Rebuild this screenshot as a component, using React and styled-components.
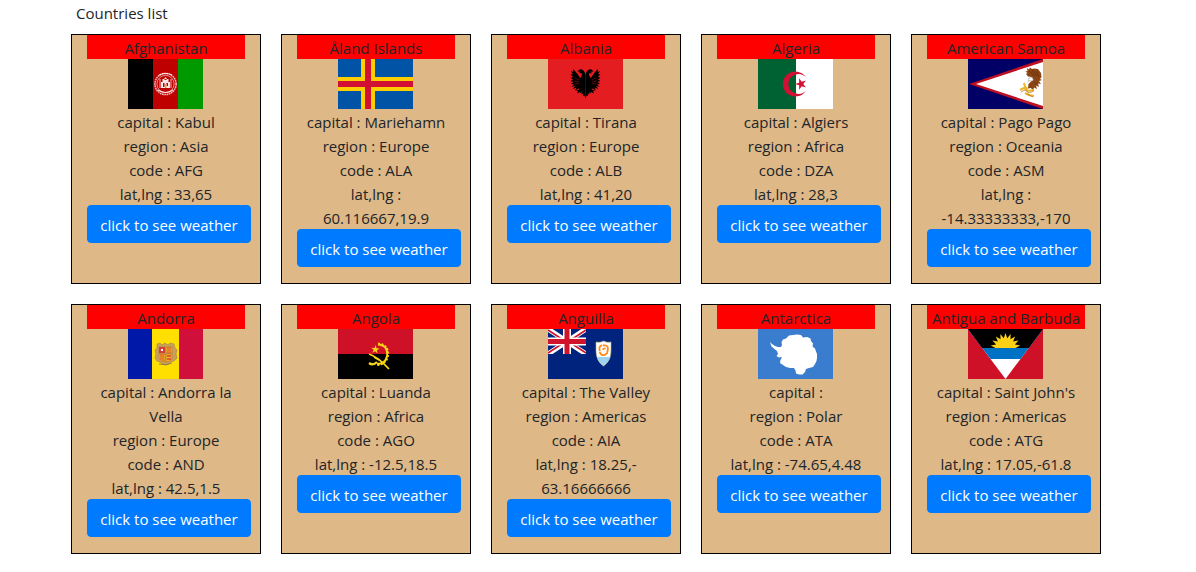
import React from "react";
import styled, { createGlobalStyle } from "styled-components";

const GlobalStyle = createGlobalStyle`
  *, *::before, *::after { box-sizing: border-box; }
  body {
    margin: 0;
    background: #fff;
    color: #212529;
    font-family: "Segoe UI", "Open Sans", "Noto Sans", sans-serif;
    font-size: 15px;
    line-height: 24px;
  }
`;

const Page = styled.main`
  padding: 0 40px 10px 16px;
`;

const CountryGrid = styled.div`
  display: grid;
  grid-template-columns: repeat(auto-fill, 210px);
  justify-content: center;
`;

const Title = styled.h1`
  grid-column: 1 / -1;
  margin: 0;
  padding: 1px 15px 0;
  height: 24px;
  font-size: 15px;
  font-weight: 400;
`;

const Card = styled.article`
  min-height: 250px;
  margin: 10px;
  padding: 0 15px;
  border: 1px solid #000;
  background: #deb887;
  text-align: center;
`;

const Name = styled.h2`
  margin: 0;
  height: 24px;
  background: #f00;
  font-size: 15px;
  font-weight: 400;
  line-height: 26px;
  white-space: nowrap;
`;

const Flag = styled.svg`
  display: block;
  width: 75px;
  height: 50px;
  margin: 0 42px 0 41px;
`;

const Details = styled.div`
  padding-top: 1px;
  margin-bottom: -1px;
`;

const Detail = styled.p`
  margin: 0;
`;

const WeatherButton = styled.button`
  display: block;
  width: 164px;
  height: 38px;
  padding: 2px 0 0;
  border: 1px solid #007bff;
  border-radius: 4px;
  background: #007bff;
  color: #fff;
  font: inherit;
  white-space: nowrap;
  cursor: pointer;
`;

const star = (cx, cy, r, inner, points, turn = -90) =>
  Array.from({ length: points * 2 }, (_, i) => {
    const a = ((turn + (i * 180) / points) * Math.PI) / 180;
    const d = i % 2 ? inner : r;
    return `${(cx + d * Math.cos(a)).toFixed(2)},${(cy + d * Math.sin(a)).toFixed(2)}`;
  }).join(" ");

const eagleHalf =
  "M37.5 16L36.8 13.5L35.5 11.5L33.5 10.200L31.500 10.500L29.500 12.500L32.200 12.800L31 14.300L33.500 14L34 16L32.500 19L31.500 18L29.500 15L27 12L25 10L25.500 13L23 12L25 15.500L22.500 15L25 18L22.500 18.800L25 20.500L22.500 22L25.500 23L23 25L26 25.200L23.500 27.800L27 27L25 30L28.500 28.500L27 31.500L30.500 29.500L31.500 30.500L28 31.500L30 32.500L29 34.500L32 33L32.500 34.500L34 32.500L33.500 35.500L35.200 34.500L35 37L36.500 36.500L37.500 39.500Z";

const flags = {
  AFG: (
    <>
      <path fill="#000" d="M0 0h25v50H0z" />
      <path fill="#bf0000" d="M25 0h25v50H25z" />
      <path fill="#009a00" d="M50 0h25v50H50z" />
      <g fill="none" stroke="#fff">
        <circle cx="37.5" cy="25" r="10.6" strokeWidth="1.5" strokeDasharray="1.7 .6" opacity=".75" />
        <circle cx="37.5" cy="25" r="8.6" strokeWidth=".8" opacity=".7" />
        <path d="M30 31q7.500 5 15 0M31 16q6.500-3 13 0" strokeWidth="1.2" opacity=".8" />
        <path d="M32 20v9M43 20v9" strokeWidth="1" opacity=".7" />
      </g>
      <path fill="#fff" opacity=".9" d="M33 29v-6h1.500v-3h1.500l1.500-2 1.500 2h1.500v3H42v6z" />
      <path fill="#bf0000" d="M35 24h1.500v4H35zM38.500 24H40v3h-1.500zM36.500 20h2v1h-2z" />
      <path fill="#d9ad3c" d="M37 25h1.500v4H37z" />
    </>
  ),
  ALA: (
    <>
      <path fill="#0053a5" d="M0 0h75v50H0z" />
      <path fill="#ffce00" d="M23 0h14v50H23zM0 18h75v14H0z" />
      <path fill="#d21034" d="M27 0h6v50h-6zM0 22h75v6H0z" />
    </>
  ),
  ALB: (
    <>
      <path fill="#e41e20" d="M0 0h75v50H0z" />
      <path d={eagleHalf} />
      <path d={eagleHalf} transform="translate(75 0) scale(-1 1)" />
      <path
        d="M27 19l4 2m-5 1 5 1m-4 2 4-.5m17-5.500-4 2m5 1-5 1m4 2-4-.5"
        fill="none"
        stroke="#8c1415"
        strokeWidth=".6"
      />
    </>
  ),
  DZA: (
    <>
      <path fill="#006233" d="M0 0h38v50H0z" />
      <path fill="#fff" d="M38 0h37v50H38z" />
      <path fill="#d21034" d="M48 18.500a12.500 12.500 0 1 0 0 13 10 10 0 1 1 0-13z" />
      <polygon fill="#d21034" points={star(43, 25, 6, 2.3, 5, 180)} />
    </>
  ),
  ASM: (
    <>
      <path fill="#006" d="M0 0h75v50H0z" />
      <path fill="#bd1021" d="M75 0v50L1 25z" />
      <path fill="#fff" d="M75 3v44L8 25z" />
      <path
        fill="#8b4513"
        d="M59 9L61 10.500L62 8.500L64 10L66 9.500L70 10L73 14L73.500 18L72 20L74 21L71 22L73 25L70 24.500L71 28L68 26.500L69 30L66 28.500L65 32L63 29L60 29.500L60.500 25L63 22.500L65.500 21L64 18L60 17.500L58 15L59.500 14L57.500 12.500L59.500 12Z"
      />
      <path fill="none" stroke="#5e2c0d" strokeWidth=".7" d="M61 12L67 17M64 11L69 17M68 12L71 18M66 23L69 25" />
      <path fill="#fff" stroke="#888" strokeWidth=".5" d="M61 19L64 18.500L65 20.500L63.500 22L62 21.500L60 22.500Z" />
      <path fill="none" stroke="#e9b52b" strokeWidth="2" d="M52 31L56 29L60 32L66 31M56 24L57 28L60 30M57 34L61 36L66 37" />
      <path fill="none" stroke="#b56b22" strokeWidth=".7" d="M53 33L57 31L61 34L66 32M59 35L65 38" />
    </>
  ),
  AND: (
    <>
      <path fill="#0018a8" d="M0 0h24v50H0z" />
      <path fill="#fedf00" d="M24 0h27v50H24z" />
      <path fill="#d0103a" d="M51 0h24v50H51z" />
      <path
        fill="#c7a05b"
        stroke="#a98244"
        strokeWidth=".6"
        d="M29 15l3-1 2 2 3-2 3 2 2-2 4 1 1 4 2 2-1 4 1 4-3 3-3 1-2 2-3 1-4-1-2-2-3-1-2-3 1-4-1-4 2-2z"
      />
      <path fill="#dc393e" stroke="#b96222" strokeWidth=".5" d="M31 18h6v6h-6z" />
      <path fill="#fff" d="M33 20h2v2h-2z" />
      <path fill="#efb52d" stroke="#b96222" strokeWidth=".5" d="M38 18h6v6h-6zM31 25h6v8q-5 0-6-4zM38 25h6v4q-1 4-6 4z" />
      <path stroke="#d6532b" d="M40 18v6m2-6v6m-9 1v6m2-6v7" />
      <path stroke="#c8102e" d="M39 27h4m-4 3h4" />
      <path stroke="#8a773d" d="M31 35q7 2 13-1" fill="none" strokeWidth=".8" />
    </>
  ),
  AGO: (
    <>
      <path fill="#ce1126" d="M0 0h75v25H0z" />
      <path fill="#000" d="M0 25h75v25H0z" />
      <g fill="none" stroke="#f9d616">
        <path d="M40 15.500C47 16 50 20 49 27c-1 6-6 8-10 8" strokeWidth="2" />
        <path d="M40 14.500C48 15 51 20 50 27c-1 6-6 9-11 9" strokeWidth="1.800" strokeDasharray="2 1.500" />
        <path d="M31 34q4 3 8-1" strokeWidth="2.200" />
        <path d="M31 25q9 3 20 15" strokeWidth="1.800" />
        <path d="m36 28 5 3" strokeWidth="1.500" />
      </g>
      <polygon fill="#f9d616" points={star(37.3, 20.5, 4.5, 1.7, 5, -84)} />
    </>
  ),
  AIA: (
    <>
      <path fill="#00247d" d="M0 0h75v50H0z" />
      <svg width="38" height="25" viewBox="0 0 38 25">
        <path stroke="#fff" strokeWidth="5" d="m0 0 38 25M38 0 0 25" />
        <path stroke="#cf142b" strokeWidth="1.700" d="m0 1 19 12.500M38 24 19 11.500M38 1 19 13.500M0 24l19-12.500" />
        <path stroke="#fff" strokeWidth="8" d="M19 0v25M0 12.500h38" />
        <path stroke="#cf142b" strokeWidth="5" d="M19 0v25M0 12.500h38" />
      </svg>
      <path fill="#fff" stroke="#b6ac72" strokeWidth=".6" d="M48 13q4 1 7.500-1 4 2 7.500 1v8c0 8-3 13-7.500 16-4.500-3-7.500-8-7.500-16z" />
      <path fill="#9bd2ef" d="M49 28h13.500q-2 5-7 8.500-5-3.500-6.500-8.500z" />
      <g fill="none" stroke="#ff8b18" strokeWidth="1.800">
        <path d="M54 16q-4 2-2 6M55 16.500q5-1 5 3.500l-1 4M51.500 23q2 4 5 3l3-2" />
        <path d="m54.500 20.500 3-1.500" strokeWidth="1.800" />
      </g>
    </>
  ),
  ATA: (
    <>
      <path fill="#3a7dce" d="M0 0h75v50H0z" />
      <path
        fill="#fff"
        d="M12 13L14 15L17 17L20 18L23 18L24 16L23.500 13L25 10.500L28 9.500L31 6.500L35 6L39 5.500L43 6L45 8.500L49 8L52.500 9.500L53 12L55 14.500L54.500 17.500L57 19.500L58 22.500L59 25L59 29L58.500 32L57 35L55 38L51 39L48 40L47 43L44.500 45.500L41 45.500L38 44.500L37.500 41.500L36 39L32 39L28 38L25 36L22 34L22.500 31L24 28L21 28.500L18.500 27L20 25L19 22L16.500 20L13.500 17.500Z"
      />
    </>
  ),
  ATG: (
    <>
      <path fill="#ce1126" d="M0 0h75v50H0z" />
      <path fill="#fff" d="M0 0h75L37.500 50z" />
      <path fill="#0072c6" d="M0 0h75L52.500 30h-30z" />
      <path fill="#000" d="M0 0h75L60.800 19H14.200z" />
      <svg width="75" height="19" viewBox="0 0 75 19">
        <polygon fill="#fcd116" points={star(37.5, 19, 15, 10, 18)} />
      </svg>
    </>
  ),
};

const countries = [
  { code: "AFG", name: "Afghanistan", capital: "Kabul", region: "Asia", latlng: [33, 65] },
  { code: "ALA", name: "Åland Islands", capital: "Mariehamn", region: "Europe", latlng: [60.116667, 19.9] },
  { code: "ALB", name: "Albania", capital: "Tirana", region: "Europe", latlng: [41, 20] },
  { code: "DZA", name: "Algeria", capital: "Algiers", region: "Africa", latlng: [28, 3] },
  { code: "ASM", name: "American Samoa", capital: "Pago Pago", region: "Oceania", latlng: [-14.33333333, -170] },
  { code: "AND", name: "Andorra", capital: "Andorra la Vella", region: "Europe", latlng: [42.5, 1.5] },
  { code: "AGO", name: "Angola", capital: "Luanda", region: "Africa", latlng: [-12.5, 18.5] },
  { code: "AIA", name: "Anguilla", capital: "The Valley", region: "Americas", latlng: [18.25, -63.16666666] },
  { code: "ATA", name: "Antarctica", capital: "", region: "Polar", latlng: [-74.65, 4.48] },
  { code: "ATG", name: "Antigua and Barbuda", capital: "Saint John's", region: "Americas", latlng: [17.05, -61.8] },
];

function Coordinates({ lat, lng }) {
  if (lat >= 0 && lng < 0) {
    return (
      <>
        {lat},-
        <wbr />
        {-lng}
      </>
    );
  }
  return `${lat},${lng}`;
}

function CountryCard({ country }) {
  const { code, name, capital, region, latlng } = country;
  return (
    <Card>
      <Name>{name}</Name>
      <Flag viewBox="0 0 75 50" role="img" aria-label={`Flag of ${name}`}>
        {flags[code]}
      </Flag>
      <Details>
        <Detail>capital : {capital}</Detail>
        <Detail>region : {region}</Detail>
        <Detail>code : {code}</Detail>
        <Detail>
          lat,lng : <Coordinates lat={latlng[0]} lng={latlng[1]} />
        </Detail>
      </Details>
      <WeatherButton type="button">click to see weather</WeatherButton>
    </Card>
  );
}

export default function App() {
  return (
    <>
      <GlobalStyle />
      <Page>
        <CountryGrid>
          <Title>Countries list</Title>
          {countries.map((country) => (
            <CountryCard key={country.code} country={country} />
          ))}
        </CountryGrid>
      </Page>
    </>
  );
}
